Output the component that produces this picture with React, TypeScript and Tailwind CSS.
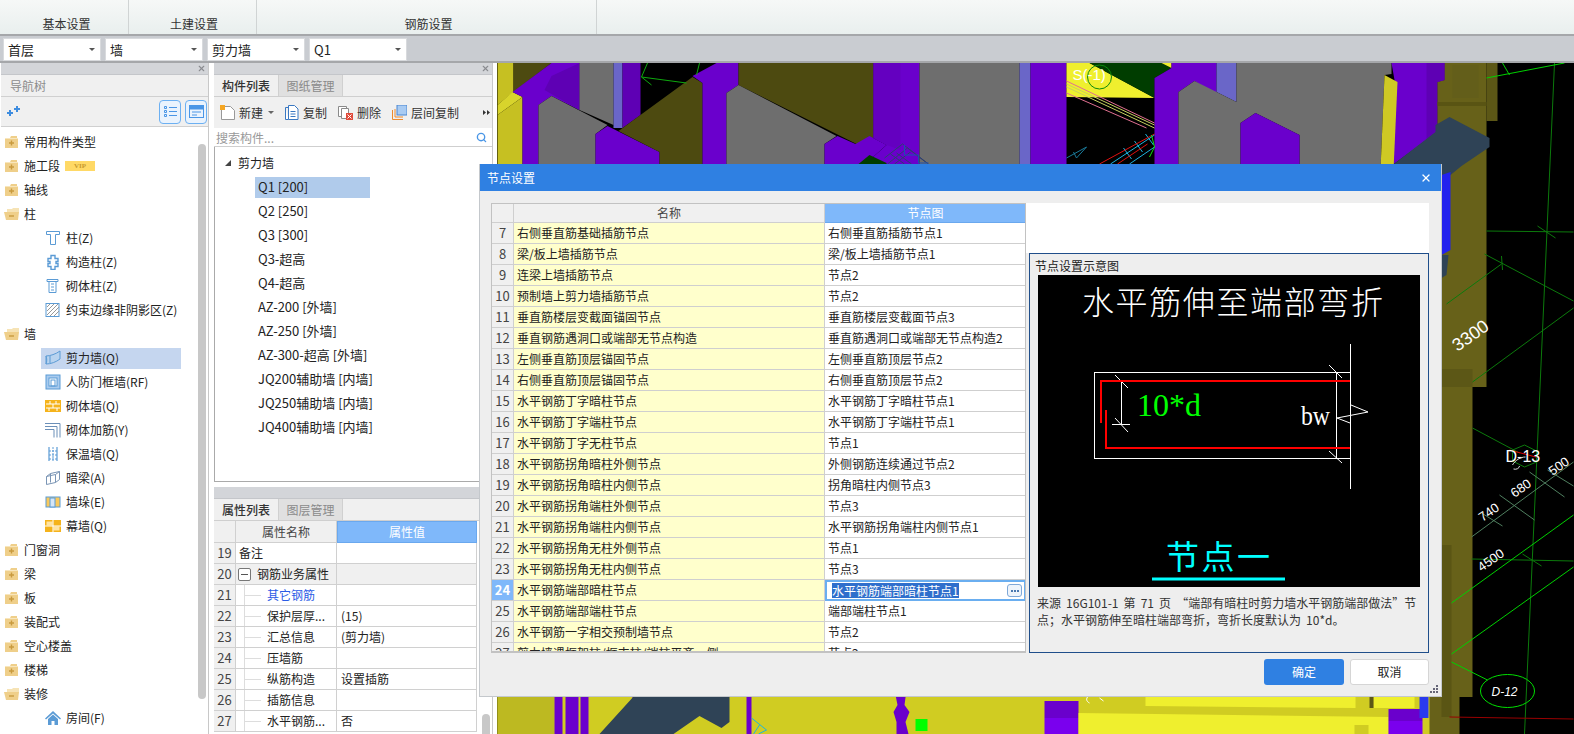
import React from "react";
import { X, Search } from "lucide-react";

const TREE = [
  { t: "常用构件类型", k: "closed" },
  { t: "施工段", k: "closed", vip: true },
  { t: "轴线", k: "closed" },
  { t: "柱", k: "open" },
  { t: "柱(Z)", k: "column" },
  { t: "构造柱(Z)", k: "tie" },
  { t: "砌体柱(Z)", k: "brickcol" },
  { t: "约束边缘非阴影区(Z)", k: "hatch" },
  { t: "墙", k: "open" },
  { t: "剪力墙(Q)", k: "shear", sel: true },
  { t: "人防门框墙(RF)", k: "frame" },
  { t: "砌体墙(Q)", k: "brick" },
  { t: "砌体加筋(Y)", k: "rebar" },
  { t: "保温墙(Q)", k: "insul" },
  { t: "暗梁(A)", k: "beam" },
  { t: "墙垛(E)", k: "pier" },
  { t: "幕墙(Q)", k: "curtain" },
  { t: "门窗洞", k: "closed" },
  { t: "梁", k: "closed" },
  { t: "板", k: "closed" },
  { t: "装配式", k: "closed" },
  { t: "空心楼盖", k: "closed" },
  { t: "楼梯", k: "closed" },
  { t: "装修", k: "open" },
  { t: "房间(F)", k: "room" },
];

const COMPONENTS = [
  "Q1 [200]", "Q2 [250]", "Q3 [300]", "Q3-超高", "Q4-超高", "AZ-200 [外墙]", "AZ-250 [外墙]",
  "AZ-300-超高 [外墙]", "JQ200辅助墙 [内墙]", "JQ250辅助墙 [内墙]", "JQ400辅助墙 [内墙]",
];

const PROPS = [
  { n: 19, name: "备注", val: "", kind: "plain" },
  { n: 20, name: "钢筋业务属性", val: "", kind: "group" },
  { n: 21, name: "其它钢筋", val: "", kind: "link" },
  { n: 22, name: "保护层厚...", val: "(15)", kind: "child" },
  { n: 23, name: "汇总信息", val: "(剪力墙)", kind: "child" },
  { n: 24, name: "压墙筋", val: "", kind: "child" },
  { n: 25, name: "纵筋构造", val: "设置插筋", kind: "child" },
  { n: 26, name: "插筋信息", val: "", kind: "child" },
  { n: 27, name: "水平钢筋...", val: "否", kind: "child" },
];

const NODES: [number, string, string][] = [
  [7, "右侧垂直筋基础插筋节点", "右侧垂直筋插筋节点1"],
  [8, "梁/板上墙插筋节点", "梁/板上墙插筋节点1"],
  [9, "连梁上墙插筋节点", "节点2"],
  [10, "预制墙上剪力墙插筋节点", "节点2"],
  [11, "垂直筋楼层变截面锚固节点", "垂直筋楼层变截面节点3"],
  [12, "垂直钢筋遇洞口或端部无节点构造", "垂直筋遇洞口或端部无节点构造2"],
  [13, "左侧垂直筋顶层锚固节点", "左侧垂直筋顶层节点2"],
  [14, "右侧垂直筋顶层锚固节点", "右侧垂直筋顶层节点2"],
  [15, "水平钢筋丁字暗柱节点", "水平钢筋丁字暗柱节点1"],
  [16, "水平钢筋丁字端柱节点", "水平钢筋丁字端柱节点1"],
  [17, "水平钢筋丁字无柱节点", "节点1"],
  [18, "水平钢筋拐角暗柱外侧节点", "外侧钢筋连续通过节点2"],
  [19, "水平钢筋拐角暗柱内侧节点", "拐角暗柱内侧节点3"],
  [20, "水平钢筋拐角端柱外侧节点", "节点3"],
  [21, "水平钢筋拐角端柱内侧节点", "水平钢筋拐角端柱内侧节点1"],
  [22, "水平钢筋拐角无柱外侧节点", "节点1"],
  [23, "水平钢筋拐角无柱内侧节点", "节点3"],
  [24, "水平钢筋端部暗柱节点", "水平钢筋端部暗柱节点1"],
  [25, "水平钢筋端部端柱节点", "端部端柱节点1"],
  [26, "水平钢筋一字相交预制墙节点", "节点2"],
  [27, "剪力墙遇框架柱/框支柱/端柱平齐一侧", "节点2"],
];

function TreeIcon({ k }: { k: string }) {
  const blue = "#5b9bd5";
  const orange = "#f5b31b";
  if (k === "closed")
    return (
      <svg width="16" height="14" viewBox="0 0 16 14">
        <path d="M1 3h5l1-2h6v2h1v10H1z" fill="#efcf8a" />
        <path d="M1 3h13v1H1z" fill="#f8e6bd" />
        <path d="M5 8h5M7.500 5.500v5" stroke="#c99a3e" strokeWidth="1.400" />
      </svg>
    );
  if (k === "open")
    return (
      <svg width="16" height="14" viewBox="0 0 16 14">
        <path d="M3 2h5l1-1h6v4H3z" fill="#f6e3b5" />
        <path d="M0 5h15l-1 8H2z" fill="#efcf8a" />
        <path d="M5 9h5" stroke="#c99a3e" strokeWidth="1.400" />
      </svg>
    );
  const common = { width: 16, height: 16, viewBox: "0 0 16 16", fill: "none", stroke: blue, strokeWidth: 1 };
  switch (k) {
    case "column":
      return <svg {...common}><path d="M1.500 1.500h13v3h-4v10h-5v-10h-4z" /></svg>;
    case "tie":
      return <svg {...common}><path d="M6 1.500h4v3h3v3h-2v2h2v3h-3v3H6v-3H3v-3h2v-2H3v-3h3z" strokeWidth="1.400" /></svg>;
    case "brickcol":
      return <svg {...common}><path d="M2 1.500h11v2H2zM4 3.500h7v11H4zM6 6h3M6 9h3M6 12h3" /></svg>;
    case "hatch":
      return (
        <svg {...common}>
          <rect x="1" y="1.500" width="13" height="13" />
          <path d="M2 5l3-3M2 9l7-7M2 13l11-11M5 14l9-9M9 14l5-5" stroke="#999" />
        </svg>
      );
    case "shear":
      return (
        <svg {...common}>
          <path d="M1 6c4 0 10-2 14-5v8c-4 3-9 5-14 5z" fill="#b8d3ef" />
          <path d="M1 6c1 2 1 6 0 8M5 6v7" />
        </svg>
      );
    case "frame":
      return (
        <svg {...common}>
          <rect x="1" y="1" width="14" height="14" fill="#a9cbee" />
          <rect x="4" y="4" width="8" height="8" fill="#fff" />
          <rect x="6" y="6" width="4" height="6" />
        </svg>
      );
    case "brick":
      return (
        <svg {...common} stroke="#fff">
          <rect x="0" y="2" width="16" height="12" fill={orange} stroke="none" />
          <path d="M1 6h14M1 10h14M5 3v3M11 3v3M8 6v4M4 10v3M12 10v3" />
        </svg>
      );
    case "rebar":
      return <svg {...common} stroke="#6b8fb8"><path d="M0 1.500h15v14M0 4.500h12v11M0 7.500h9v8" /></svg>;
    case "insul":
      return <svg {...common}><path d="M4 1v14M12 1v14" strokeWidth="1.200" /><path d="M8 1v14M4 5h8M4 9h8M4 13h8" strokeDasharray="2 1" /></svg>;
    case "beam":
      return <svg {...common} stroke="#7a95b5"><path d="M1.500 6.500l4-3 9-2v8l-4 3-9 2zM5.500 3.500v9M1.500 6.500l9-2v8M10.500 4.500l4-3" /></svg>;
    case "pier":
      return (
        <svg {...common}>
          <rect x="1" y="3" width="14" height="10" fill="#f9c95c" />
          <rect x="5" y="4" width="5" height="9" fill="#d5e6f7" />
        </svg>
      );
    case "curtain":
      return (
        <svg {...common} stroke="#fff">
          <rect x="0" y="2" width="16" height="12" fill={orange} stroke="none" />
          <rect x="1.500" y="3.500" width="6" height="4" fill="#ffe4a3" stroke="none" />
          <rect x="8.500" y="8.500" width="6" height="4" fill="#ffe4a3" stroke="none" />
          <path d="M8 2v12M0 8h16" />
        </svg>
      );
    case "room":
      return (
        <svg width="16" height="16" viewBox="0 0 16 16">
          <path d="M8 1L0 8.500l1 1L8 3.500l7 6 1-1z" fill="#5b9bd5" />
          <path d="M3 9l5-4.500L13 9v6H9.500v-4h-3v4H3z" fill="#5b9bd5" />
        </svg>
      );
    default:
      return null;
  }
}

function Select({ label }: { label: string }) {
  return (
    <div className="w-[98px] h-[23px] bg-white border border-[#d8dadd] flex items-center justify-between pl-[4px] pr-[4px] text-[13px] text-[#222]">
      <span>{label}</span>
      <span className="w-0 h-0 border-x-[3px] border-x-transparent border-t-[3px] border-t-[#555] mr-[1px]" />
    </div>
  );
}

function PanelStrip() {
  return (
    <div className="h-[12px] bg-[#d3d5d9] border-b border-[#c4c6ca] flex items-center justify-end pr-[2px] shrink-0">
      <X size={9} strokeWidth={3} className="text-[#8a8c90]" />
    </div>
  );
}

function TabPair({ a, b }: { a: string; b: string }) {
  return (
    <div className="h-[22px] shrink-0 flex bg-[#f0f0f0] border-b border-[#cfcfcf] text-[12px]">
      <div className="w-[64px] flex items-center justify-center text-[#333] font-medium bg-[#f0f0f0]">{a}</div>
      <div className="w-[65px] flex items-center justify-center text-[#8a8a8a] bg-[#e0e0e0] border-l border-r border-[#d0d0d0]">{b}</div>
    </div>
  );
}

function NavTree() {
  return (
    <div className="ml-px w-[208px] flex flex-col border-r border-[#c8c8c8] bg-white relative">
      <PanelStrip />
      <div className="h-[22px] shrink-0 bg-[#f0f0f0] border-b border-[#d0d0d0] pl-[9px] flex items-center text-[12px] text-[#8c8c8c]">导航树</div>
      <div className="h-[30px] shrink-0 bg-[#f0f0f0] border-b border-[#d0d0d0] flex items-center pl-[6px] pr-[1px]">
        <svg width="13" height="11" viewBox="0 0 13 11">
          <path d="M0 7h6M3 4v6" stroke="#3f8ddf" strokeWidth="2" />
          <path d="M7 3h6M10 0v6" stroke="#3f8ddf" strokeWidth="2" />
        </svg>
        <div className="ml-auto flex gap-[4px]">
          <div className="w-[22px] h-[24px] rounded-[4px] border border-[#6cb0f2] bg-[#eaf3fd] flex items-center justify-center">
            <svg width="13" height="13" viewBox="0 0 13 13" fill="none" stroke="#4a96e6">
              <path d="M.5 1.500h2v2h-2zM.5 5.500h2v2h-2zM.5 9.500h2v2h-2zM5 2.500h8M5 6.500h8M5 10.500h8" />
            </svg>
          </div>
          <div className="w-[22px] h-[24px] rounded-[4px] border border-[#6cb0f2] bg-[#eaf3fd] flex items-center justify-center">
            <svg width="15" height="13" viewBox="0 0 15 13" fill="none" stroke="#4a96e6">
              <rect x=".5" y=".5" width="14" height="12" />
              <path d="M1 1h13v3H1z" fill="#4a96e6" />
              <path d="M3 7h9M3 10h5" />
            </svg>
          </div>
        </div>
      </div>
      <div className="flex-1 pt-[3px] overflow-hidden">
        {TREE.map((r) => {
          const child = r.k !== "closed" && r.k !== "open";
          return (
            <div key={r.t + r.k} className={`h-[24px] flex items-center text-[12px] text-[#222] ${child ? "pl-[40px]" : "pl-[3px]"}`}>
              <div className={`flex items-center h-[21px] ${child ? "w-[140px] pl-[4px]" : ""} ${r.sel ? "bg-[#c5d6ef]" : ""}`}>
                <TreeIcon k={r.k} />
                <span className={child ? "ml-[5px]" : "ml-[4px]"}>{r.t}</span>
                {r.vip && (
                  <span className="ml-[5px] w-[30px] h-[10px] bg-[#ffd966] text-[#c79a2e] text-[7px] leading-[10px] text-center font-bold font-['Liberation_Serif',serif]">VIP</span>
                )}
              </div>
            </div>
          );
        })}
      </div>
      <div className="absolute left-[197px] top-[81px] w-[8px] h-[555px] rounded-full bg-[#c8c8c8]" />
    </div>
  );
}

function ToolBtn({ icon, label, caret }: { icon: React.ReactNode; label: string; caret?: boolean }) {
  return (
    <div className="flex items-center gap-[4px] text-[12px] text-[#333]">
      {icon}
      <span>{label}</span>
      {caret && <span className="ml-[1px] w-0 h-0 border-x-[3px] border-x-transparent border-t-[3px] border-t-[#666]" />}
    </div>
  );
}

function ComponentPanel() {
  return (
    <div className="ml-[5px] w-[279px] flex flex-col relative bg-white border-r border-[#c8c8c8]">
      <PanelStrip />
      <TabPair a="构件列表" b="图纸管理" />
      <div className="h-[31px] shrink-0 bg-[#f0f0f0] flex items-center pl-[6px] gap-[11px]">
        <ToolBtn
          caret
          label="新建"
          icon={
            <svg width="15" height="15" viewBox="0 0 15 15" fill="#fff" stroke="#999">
              <path d="M1.500 1.500h9l4 4v9h-13z" />
              <rect x="0" y="0" width="5" height="5" fill="#f5a623" stroke="none" />
            </svg>
          }
        />
        <ToolBtn
          label="复制"
          icon={
            <svg width="14" height="15" viewBox="0 0 14 15" fill="#fff" stroke="#3a78c2">
              <path d="M.5 2.500h3M.5 2.500v12h3" />
              <path d="M3.500.5h6l3.500 3.500v10.500H3.500zM5.500 6.500h5M5.500 9h5M5.500 11.500h5" />
            </svg>
          }
        />
        <ToolBtn
          label="删除"
          icon={
            <svg width="15" height="15" viewBox="0 0 15 15" fill="#fff" stroke="#8a8a8a">
              <path d="M.5 1.500h8v10h-8z" />
              <path d="M3.500 3.500h7v10h-7z" />
              <rect x="8" y="8" width="7" height="7" fill="#e04a3a" stroke="none" />
              <path d="M9.500 9.500l4 4M13.500 9.500l-4 4" stroke="#fff" />
            </svg>
          }
        />
        <ToolBtn
          label="层间复制"
          icon={
            <svg width="15" height="15" viewBox="0 0 15 15" fill="none" stroke="#ee8a2c">
              <path d="M.5 5v9.500H11M3 4v8h8" />
              <rect x="5" y="0" width="10" height="10" fill="#a9cbf2" stroke="#4a86d0" />
            </svg>
          }
        />
        <svg className="ml-auto mr-[2px]" width="7" height="5" viewBox="0 0 7 5" fill="#333">
          <path d="M0 0l3 2.500L0 5zM4 0l3 2.500L4 5z" />
        </svg>
      </div>
      <div className="h-[19px] shrink-0 bg-white border-b border-[#cfcfcf] flex items-center pl-[2px] pr-[5px] pt-[1px] text-[12px] text-[#999]">
        <span>搜索构件...</span>
        <Search size={11} strokeWidth={3} className="ml-auto text-[#4a96e6]" />
      </div>
      <div className="h-[335px] shrink-0 border-b border-[#aaa] border-l bg-white text-[12px] text-[#222] pt-[4px]">
        <div className="h-[24px] flex items-center pl-[10px]">
          <span className="w-0 h-0 border-l-[6px] border-l-transparent border-b-[6px] border-b-[#444]" />
          <span className="ml-[7px]">剪力墙</span>
        </div>
        {COMPONENTS.map((c, i) => (
          <div key={c} className="h-[24px] flex items-center pl-[40px]">
            <div className={`w-[115px] h-[21px] pl-[3px] flex items-center whitespace-nowrap text-[13px] ${i === 0 ? "bg-[#b0cbeb]" : ""}`}>{c}</div>
          </div>
        ))}
      </div>
      <div className="h-[5px] shrink-0" />
      <div className="h-[12px] shrink-0 bg-[#d3d5d9] border-b border-[#c4c6ca]" />
      <TabPair a="属性列表" b="图层管理" />
      <div className="flex-1 overflow-hidden w-[263px] text-[12px] text-[#222]">
        <div className="grid grid-cols-[22px_101px_140px] grid-rows-[22px] auto-rows-[21px]">
          <div className="bg-[#f0f0f0] border-r border-b border-[#d0d0d0]" />
          <div className="bg-[#f0f0f0] border-r border-b border-[#d0d0d0] flex items-center justify-center text-[#444]">属性名称</div>
          <div className="bg-[#7fb8fa] border border-[#6aa8ee] flex items-center justify-center text-white">属性值</div>
          {PROPS.map((p) => (
            <React.Fragment key={p.n}>
              <div className="bg-[#f0f0f0] border-r border-b border-[#d0d0d0] flex items-center justify-center text-[13px] text-[#444]">{p.n}</div>
              <div className={`relative border-r border-b border-[#d0d0d0] flex items-center whitespace-nowrap ${p.kind === "group" ? "bg-[#f0f0f0]" : "bg-white"} ${p.kind === "plain" ? "pl-[3px]" : p.kind === "group" ? "pl-[21px]" : "pl-[31px]"} ${p.kind === "link" ? "text-[#2b5ce6]" : ""}`}>
                {p.kind === "group" && (
                  <span className="absolute left-[2px] top-[4px] w-[13px] h-[13px] border border-[#777] rounded-[2px] bg-white flex items-center justify-center">
                    <span className="w-[7px] h-px bg-[#555]" />
                  </span>
                )}
                {(p.kind === "link" || p.kind === "child") && (
                  <>
                    <span className="absolute left-[8px] top-0 bottom-0 w-px bg-[#ddd]" />
                    <span className="absolute left-[8px] top-[10px] w-[17px] h-px bg-[#ddd]" />
                  </>
                )}
                {p.name}
              </div>
              <div className={`border-r border-b border-[#d0d0d0] flex items-center pl-[4px] ${p.kind === "group" ? "bg-[#f0f0f0]" : "bg-white"}`}>{p.val}</div>
            </React.Fragment>
          ))}
        </div>
      </div>
      <div className="absolute left-[268px] bottom-0 w-[8px] h-[20px] rounded-t-full bg-[#c8c8c8]" />
    </div>
  );
}

function ModelCanvas() {
  const purple = "#6a00cc";
  const purpleDark = "#5e00b4";
  const grey = "#6e6e6e";
  const oliveDark = "#4d4a10";
  const olive = "#676119";
  const yellow = "#d0cc22";
  const bright = "#efef2e";
  const slate = "#2f4356";
  const steel = "#6a66c8";
  return (
    <svg className="ml-[4px] flex-1 h-[671px] bg-black" viewBox="498 63 1076 671">
      {/* top strip */}
      <polygon points="498,63 514,63 514,92 498,105" fill="#c6c022" />
      <polygon points="498,105 513,92 523,97 498,115" fill="#d8d42c" />
      <polygon points="498,115 523,97 523,170 498,170" fill="#c6c022" />
      <polygon points="514,63 552,63 514,92" fill={oliveDark} />
      <polygon points="513,92 552,63 580,63 580,110 552,96 539,105 539,170 523,170 523,97" fill={purple} />
      <polygon points="552,76 580,63 580,110 545,90" fill={purpleDark} />
      <polygon points="580,63 614,63 614,125 580,110" fill={grey} />
      <polygon points="539,105 552,96 608,125 596,134 596,170 539,170" fill={grey} />
      <polygon points="614,63 623,63 623,128 614,128" fill={steel} />
      <polygon points="623,63 641,63 641,115 623,128" fill={purpleDark} />
      <polygon points="596,134 608,126 660,152 660,170 596,170" fill={purple} />
      <polygon points="619,131 693,77 703,83 703,170 660,170 660,152" fill={oliveDark} />
      <polygon points="693,76 717,63 739,63 739,85 727,93 727,170 703,170 703,83" fill={purple} />
      <polygon points="739,63 874,63 874,138 857,144 739,85" fill={oliveDark} />
      <polygon points="727,93 739,85 837,136 825,144 825,170 727,170" fill={grey} />
      <polygon points="874,63 920,63 920,170 859,170 887,145 874,138" fill={purple} />
      <polygon points="874,63 901,63 901,150 887,145 874,138" fill="#6400c0" />
      <polygon points="825,144 838,136 856,144 870,136 887,145 859,170 825,170" fill={purple} />
      <polygon points="859,164 870,155 887,163 887,170 859,170" fill="#003d00" />
      <polygon points="920,63 1020,63 1020,170 920,170" fill={grey} />
      <polygon points="1020,63 1031,63 1031,170 1020,170" fill={steel} />
      <polygon points="1031,63 1067,63 1067,170 1031,170" fill={purple} />
      <polygon points="1067,63 1090,63 1155,98 1067,97" fill={bright} />
      <polygon points="1090,63 1162,63 1172,68 1155,78 1155,98" fill="#003d00" />
      <polygon points="1162,63 1172,63 1172,68" fill={bright} />
      <polygon points="1155,78 1172,68 1172,63 1217,63 1217,95 1195,81 1179,92 1179,170 1155,170" fill={purple} />
      <polygon points="1217,63 1237,63 1237,102 1217,92" fill={steel} />
      <polygon points="1237,63 1392,63 1392,74 1385,75 1381,170 1300,170 1300,135 1256,113 1241,123 1241,170 1179,170 1179,92 1195,81 1237,102" fill={grey} />
      <polygon points="1241,123 1256,113 1300,135 1300,170 1241,170" fill={purple} />
      <polygon points="1392,63 1445,63 1445,80 1438,82 1438,132 1393,165 1395,80" fill={purple} />
      <polygon points="1427,63 1445,63 1445,80 1438,82 1438,132 1427,140" fill={purpleDark} />
      <polygon points="1385,75 1398,82 1394,170 1381,170" fill="#cfc924" />

      {/* right strip */}
      <polygon points="1445,63 1487,63 1487,387 1473,387 1473,697 1460,697 1460,734 1429,734 1429,690 1438,160 1438,82 1445,80" fill={olive} />
      <polygon points="1487,63 1498,63 1498,121 1487,121" fill="#5c5716" />
      <polygon points="1438,63 1445,63 1445,80 1438,82" fill={purpleDark} />
      <polygon points="1453,65 1479,65 1479,98 1453,98" fill="#635e1a" />
      <polygon points="1438,102 1487,102 1487,106 1438,106" fill="#595413" />
      <polygon points="1442,369 1473,369 1473,387 1442,387" fill="#5c5716" />
      <polygon points="1442,545 1452,545 1452,717 1442,717" fill="#5a5514" />
      <polygon points="1393,165 1436,132 1436,125 1450,117 1490,138 1490,147 1462,166 1451,175 1442,178 1430,178" fill={slate} />
      <polygon points="1442,175 1451,172 1451,250 1442,255" fill="#2222ee" />
      <polygon points="1442,255 1449,255 1447,275 1442,278" fill={slate} />
      <g fill="none" stroke="#0c7a0c" strokeWidth="1">
        <line x1="1555" y1="63" x2="1525" y2="734" />
        <line x1="1487" y1="231" x2="1574" y2="232" />
        <line x1="1538" y1="226" x2="1556" y2="238" />
        <line x1="1485" y1="254" x2="1574" y2="301" />
        <line x1="1447" y1="304" x2="1502" y2="264" />
        <line x1="1502" y1="256" x2="1503" y2="270" />
        <line x1="1473" y1="382" x2="1574" y2="308" />
        <line x1="1473" y1="428" x2="1520" y2="453" />
        <line x1="1472" y1="559" x2="1574" y2="561" />
        <line x1="1523" y1="554" x2="1542" y2="566" />
      </g>
      <g stroke="#4f7f5f" strokeWidth="1">
        <line x1="1472" y1="537" x2="1574" y2="462" />
        <line x1="1500" y1="495" x2="1535" y2="520" />
        <line x1="1530" y1="472" x2="1565" y2="497" />
        <line x1="1482" y1="513" x2="1503" y2="526" />
        <line x1="1548" y1="470" x2="1574" y2="486" />
      </g>
      <g stroke="#00d000" strokeWidth="1">
        <line x1="1487" y1="78" x2="1565" y2="63" />
        <line x1="1503" y1="63" x2="1510" y2="75" />
        <line x1="1452" y1="603" x2="1574" y2="515" />
        <line x1="1452" y1="654" x2="1574" y2="567" />
        <line x1="1452" y1="662" x2="1488" y2="680" />
      </g>
      <ellipse cx="1508" cy="691" rx="27" ry="16.500" fill="none" stroke="#00e000" />
      <line x1="1450" y1="717" x2="1574" y2="719" stroke="#990000" />
      <line x1="1510" y1="450" x2="1540" y2="458" stroke="#dd0000" />
      <polygon points="1513,450 1525,445 1537,451 1537,462 1525,467 1513,461" fill="none" stroke="#0c7a0c" />
      <g fill="#fff" fontFamily="'Liberation Sans',sans-serif">
        <text x="1458" y="352" fontSize="18" transform="rotate(-35 1458 352)">3300</text>
        <text x="1506" y="462" fontSize="16">D-13</text>
        <text x="1483" y="522" fontSize="13" transform="rotate(-35 1483 522)">740</text>
        <text x="1515" y="498" fontSize="13" transform="rotate(-35 1515 498)">680</text>
        <text x="1553" y="476" fontSize="13" transform="rotate(-35 1553 476)">500</text>
        <text x="1482" y="572" fontSize="13" transform="rotate(-35 1482 572)">4500</text>
        <text x="1492" y="696" fontSize="12" fontStyle="italic">D-12</text>
      </g>
      <path d="M1513 465c3-5 8-8 13-8M1514 469c3 1 6-1 6-3" fill="none" stroke="#ddd" />

      {/* small cad details in the gap */}
      <g stroke="#0ea80e" strokeWidth="1">
        <line x1="642" y1="77" x2="687" y2="83" />
        <line x1="648" y1="63" x2="642" y2="77" />
        <line x1="652" y1="85" x2="642" y2="77" />
        <line x1="700" y1="63" x2="697" y2="75" />
      </g>
      <g fill="none" stroke="#2c3f70" strokeWidth="1">
        <path d="M885 158l18-14 26 20M888 164l20-16 18 14M895 164l16-12M905 164l-14-10M912 164l-15-11" />
        <path d="M905 145v10h14v8h10" stroke="#1c50b0" />
      </g>
      <g stroke="#e07090" strokeWidth="1">
        <line x1="1067" y1="81" x2="1155" y2="123" />
        <line x1="1067" y1="93" x2="1147" y2="128" />
      </g>
      <g stroke="#c8d060" strokeWidth="1">
        <line x1="1067" y1="84" x2="1155" y2="125" />
        <line x1="1067" y1="87" x2="1155" y2="128" />
      </g>
      <circle cx="1100" cy="77" r="12" fill="none" stroke="#0c8a0c" />
      <text x="1073" y="80" fill="#fff" fontSize="15" fontFamily="'Liberation Sans',sans-serif">S(-1)</text>
      <path d="M1067 158l20-11-10 11-3-6" fill="none" stroke="#1a7a9a" />
      <g stroke="#1cb4e0" strokeWidth="1" fill="none">
        <path d="M1111 164l44-29M1130 164l25-17M1124 148l8 11M1135 141l8 11M1146 134l8 11" />
      </g>
      <path d="M1100 164l55-30M1118 164l30-20" stroke="#e01010" fill="none" />
      <path d="M1152 135l3 12-5 10" stroke="#10e010" fill="none" />

      {/* bottom strip */}
      <rect x="498" y="690" width="932" height="44" fill={yellow} />
      <polygon points="498,697 555,697 555,734 498,734" fill="#bdb921" />
      <rect x="555" y="690" width="8" height="44" fill={purple} />
      <rect x="566" y="690" width="13" height="44" fill={purple} />
      <rect x="581" y="690" width="8" height="44" fill={purple} />
      <polygon points="633,690 646,690 646,702 640,707 633,702" fill={purple} />
      <polygon points="640,690 730,690 730,722 722,728 700,716 674,734 600,734" fill={slate} />
      <rect x="747" y="690" width="5" height="44" fill={purple} />
      <polygon points="895,690 907,690 905,705 910,712 906,722 909,734 897,734 897,722 894,712 898,705" fill={purple} />
      <rect x="916" y="719" width="12" height="12" fill="#00ff00" />
      <path d="M752 718l15 12-8 4M760 725l-6 9" stroke="#1cb4e0" fill="none" />
      <rect x="1045" y="701" width="34" height="17" fill={purple} />
      <rect x="1045" y="718" width="34" height="16" fill="#7a00ee" />
      <polygon points="1146,690 1356,690 1356,708 1146,706" fill={bright} />
      <polygon points="1079,713 1389,717 1389,734 1079,734" fill={bright} />
      <rect x="1355" y="725" width="14" height="9" fill={yellow} />
      <rect x="1374" y="690" width="41" height="18" fill={bright} />
      <rect x="1370" y="690" width="4" height="18" fill="#5c5716" />
      <rect x="1389" y="709" width="34" height="12" fill={purple} />
      <rect x="1389" y="721" width="34" height="13" fill="#7a00ee" />
      <rect x="1420" y="690" width="9" height="28" fill="#2a3aee" />
      <path d="M1088 697c-2 3 0 5 2 6M1100 698l4 3" stroke="#fff" fill="none" />
    </svg>
  );
}

function NodeDiagram() {
  return (
    <svg className="block w-[382px] h-[312px] bg-black mx-auto" viewBox="0 0 382 312">
      <text x="44" y="39" fill="#fff" fontSize="32" textLength="301" fontWeight="300" fontFamily="'Noto Sans CJK SC',sans-serif">水平筋伸至端部弯折</text>
      <g fill="none" stroke="#fff" strokeWidth="1">
        <rect x="56.500" y="97.500" width="256" height="86" />
        <line x1="298.500" y1="97" x2="298.500" y2="183" />
        <line x1="312.500" y1="69" x2="312.500" y2="214" />
        <line x1="83.500" y1="106" x2="83.500" y2="149" />
        <line x1="74" y1="149.500" x2="92" y2="149.500" />
        <line x1="77" y1="100" x2="90" y2="113" />
        <line x1="77" y1="143" x2="90" y2="157" />
        <line x1="291" y1="90" x2="304" y2="103" />
        <line x1="291" y1="176" x2="304" y2="188" />
        <polyline points="313,130 330,137 299,143 312,148" />
      </g>
      <g fill="none" stroke="#ff0000" strokeWidth="2">
        <polyline points="63,148 63,106 312,106" />
        <polyline points="68,135 68,173 312,173" />
      </g>
      <text x="99" y="141" fill="#00ff00" fontSize="32" fontFamily="'Liberation Serif',serif">10*d</text>
      <text x="263" y="150" fill="#fff" fontSize="27" textLength="29" lengthAdjust="spacingAndGlyphs" fontFamily="'Liberation Serif',serif">bw</text>
      <text x="128" y="294" fill="#00ffff" fontSize="33" textLength="104" fontFamily="'Noto Sans CJK SC',sans-serif">节点一</text>
      <line x1="114" y1="304" x2="247" y2="304" stroke="#00ffff" strokeWidth="3" />
    </svg>
  );
}

function NodeDialog() {
  return (
    <div className="absolute left-[479px] top-[164px] w-[963px] h-[533px] flex flex-col bg-[#eeeeee] border-b border-r border-l border-[#c4c8cc]">
      <div className="h-[27px] shrink-0 bg-[#2f80e2] flex items-center justify-between pl-[7px] pr-[9px] text-[12px] text-white">
        <span>节点设置</span>
        <X size={12} strokeWidth={2.500} />
      </div>
      <div className="mt-[12px] ml-[11px] h-[450px] w-[938px] flex text-[12px] text-[#222]">
        <div className="w-[535px] h-[450px] overflow-hidden border border-[#c2c2c2] border-b-[2px] bg-white">
          <div className="grid grid-cols-[22px_311px_201px] grid-rows-[19px] auto-rows-[21px]">
            <div className="bg-[#f0f0f0] border-r border-b border-[#cfcfcf]" />
            <div className="bg-[#f0f0f0] border-r border-b border-[#cfcfcf] flex items-center justify-center text-[#444]">名称</div>
            <div className="bg-[#7fb8fa] border-b border-[#6aa8ee] flex items-center justify-center text-white">节点图</div>
            {NODES.map(([n, name, val]) => {
              const active = n === 24;
              return (
                <React.Fragment key={n}>
                  <div className={`border-r border-b border-[#cfcfcf] flex items-center justify-center text-[13px] ${active ? "bg-[#7fb8fa] text-white font-bold" : "bg-[#f0f0f0] text-[#444]"}`}>{n}</div>
                  <div className="bg-[#ffffcc] border-r border-b border-[#cfcfcf] flex items-center pl-[3px] whitespace-nowrap">{name}</div>
                  {active ? (
                    <div className="border-2 border-[#6aaef0] flex items-center pl-[5px] pr-[2px] bg-white">
                      <span className="bg-[#2f6fcc] text-white leading-[15px]">{val}</span>
                      <span className="ml-auto w-[15px] h-[13px] border border-[#7fa8d8] rounded-[3px] bg-[#eef4fb] flex items-center justify-center gap-px">
                        <span className="w-[2px] h-[2px] bg-[#4a78b0]" />
                        <span className="w-[2px] h-[2px] bg-[#4a78b0]" />
                        <span className="w-[2px] h-[2px] bg-[#4a78b0]" />
                      </span>
                    </div>
                  ) : (
                    <div className="bg-white border-b border-[#cfcfcf] flex items-center pl-[3px] whitespace-nowrap">{val}</div>
                  )}
                </React.Fragment>
              );
            })}
          </div>
        </div>
        <div className="flex-1 flex flex-col">
          <div className="h-[50px] bg-white shrink-0" />
          <div className="ml-[3px] h-[400px] border border-[#1f4e8a] pt-[3px] bg-[#eeeeee]">
            <div className="h-[18px] pl-[5px] flex items-center">节点设置示意图</div>
            <NodeDiagram />
            <p className="mt-[7px] px-[7px] leading-[17px] text-[#333] whitespace-nowrap [word-spacing:2.4px]">
              来源 16G101-1 第 71 页 “端部有暗柱时剪力墙水平钢筋端部做法”节<br />
              点；水平钢筋伸至暗柱端部弯折，弯折长度默认为 10*d。
            </p>
          </div>
        </div>
      </div>
      <div className="mt-[6px] mr-[12px] flex justify-end gap-[6px] text-[12px]">
        <div className="w-[80px] h-[26px] rounded-[3px] bg-[#2f80e2] text-white flex items-center justify-center">确定</div>
        <div className="w-[79px] h-[26px] rounded-[3px] bg-white border border-[#d5d5d5] text-[#222] flex items-center justify-center">取消</div>
      </div>
      <svg className="absolute right-[2px] bottom-[2px]" width="9" height="9" viewBox="0 0 9 9" fill="#667">
        <path d="M6 0h2v2H6zM3 3h2v2H3zM6 3h2v2H6zM0 6h2v2H0zM3 6h2v2H3zM6 6h2v2H6z" />
      </svg>
    </div>
  );
}

export default function App() {
  return (
    <div className="relative w-[1574px] h-[734px] overflow-hidden flex flex-col bg-white font-['Noto_Sans_CJK_SC','Noto_Sans',sans-serif]">
      <div className="h-[36px] shrink-0 flex bg-gradient-to-b from-[#f6f8f7] to-[#e9efee] border-b-[2px] border-[#a5a7aa] text-[12px] text-[#333]">
        <div className="w-[129px] flex items-end justify-center pl-[5px] pb-px border-r border-[#d0d4d4]">基本设置</div>
        <div className="w-[128px] flex items-end justify-center pl-[3px] pb-px border-r border-[#d0d4d4]">土建设置</div>
        <div className="w-[340px] flex items-end justify-center pl-[4px] pb-px border-r border-[#d0d4d4]">钢筋设置</div>
      </div>
      <div className="h-[27px] shrink-0 bg-[#c9ccd1] border-b-[2px] border-[#a5a7aa] flex items-start pl-[3px] pt-[2px] gap-[4px]">
        <Select label="首层" />
        <Select label="墙" />
        <Select label="剪力墙" />
        <Select label="Q1" />
      </div>
      <div className="h-[671px] flex">
        <NavTree />
        <ComponentPanel />
        <ModelCanvas />
      </div>
      <NodeDialog />
    </div>
  );
}
